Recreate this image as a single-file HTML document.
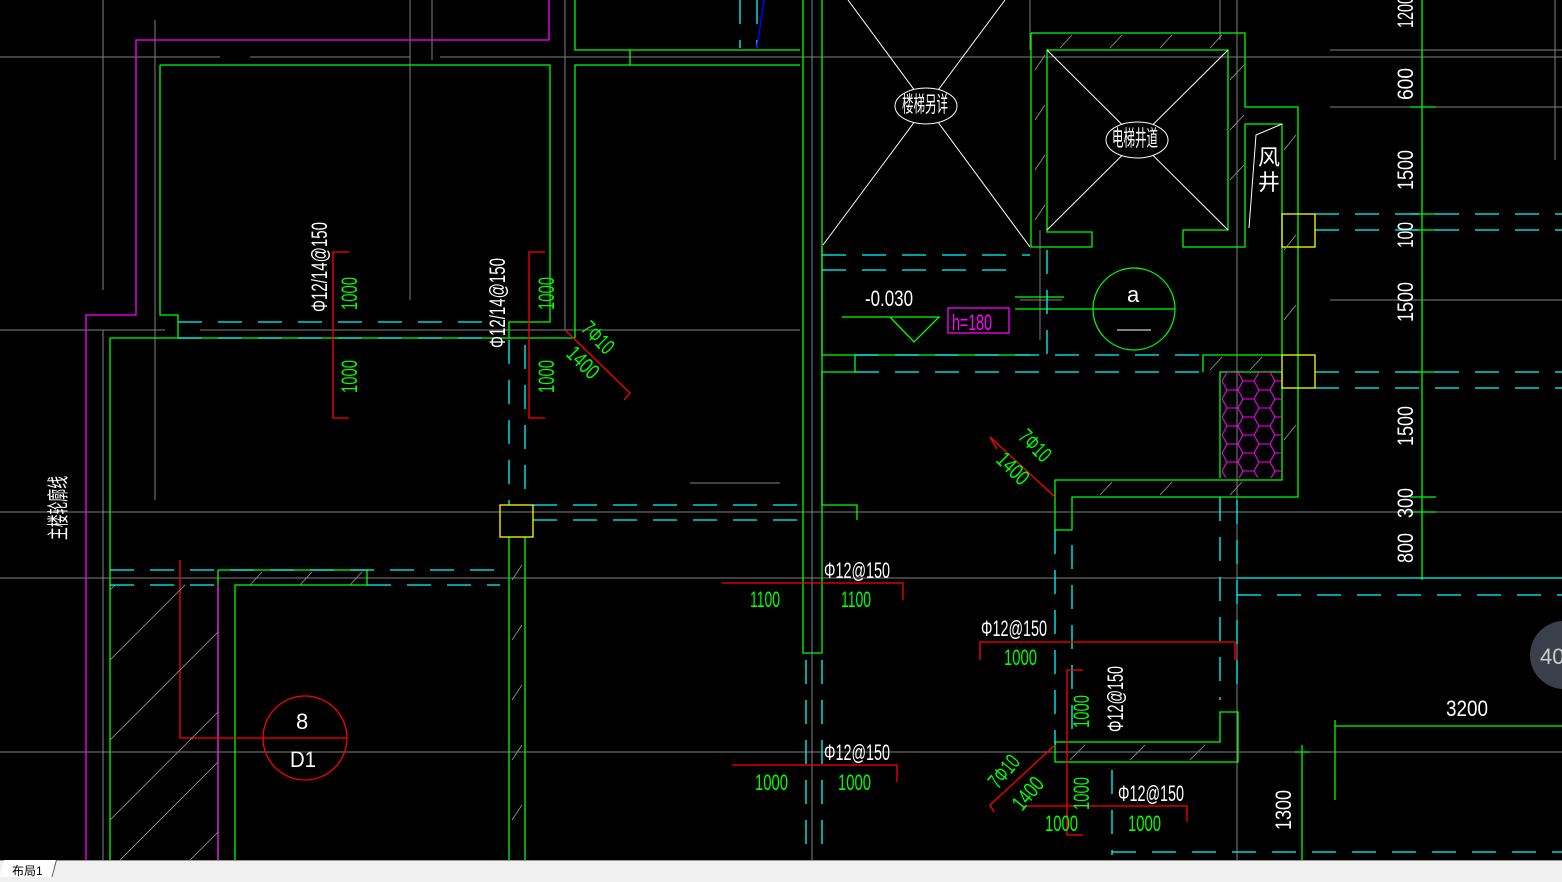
<!DOCTYPE html>
<html><head><meta charset="utf-8"><style>
html,body{margin:0;padding:0;background:#000;width:1562px;height:881px;overflow:hidden}
svg{position:absolute;left:0;top:0}
text{font-family:"Liberation Sans","Noto Sans CJK SC",sans-serif;font-size:22px}
.w{fill:#fff}.g{fill:#0f0}.m{fill:#f0f}
#bar{position:absolute;left:0;top:860px;width:1562px;height:21px;background:#f0f0f0;border-top:1px solid #999}
#tab{position:absolute;top:860px;width:52px;height:17px;background:#fff;border-right:1px solid #555;transform:skewX(-15deg);transform-origin:0 0;left:4px}
#tabt{position:absolute;left:12px;top:862px;font:12px "Liberation Sans","Noto Sans CJK SC",sans-serif;color:#000}
</style></head><body>
<svg width="1562" height="860" viewBox="0 0 1562 860">
<defs>
<pattern id="hex" x="1222" y="372" width="32" height="18" patternUnits="userSpaceOnUse">
<path d="M0 9L5 0H16L21 9L16 18H5ZM21 9H32" stroke="#f0f" fill="none" stroke-width="1"/>
</pattern>
</defs>
<rect width="1562" height="860" fill="#000"/>
<g stroke="#808080" stroke-width="1" fill="none">
<path d="M0 57H220M250 57H410M440 57H1562M0 330H165M200 330H800M0 512H1562M0 578H1562M0 752H1562M690 483H780M1330 50H1562M1330 107H1562M1330 300H1562"/>
<path d="M103 0V290M103 330V860M155 20V500M410 0V300M432 0V60M565 0V330M812 0V860M1030 0V50M1237 0V860M1220 0V40M1555 0V160M1040 230V340M1020 300H1062"/>
</g>
<g stroke="#0f0" stroke-width="1.3" fill="none">
<path d="M160 65H550V322H509V338M160 65V315H178V338M110 338H575M110 338V860M575 0V50H630V65H575V338"/>
<path d="M630 50H800M630 65H800"/>
<path d="M803 0V653H822V0"/>
<path d="M218 570H367V585H235V860M218 570V860"/>
<path d="M509 537V860M525 537V860"/>
<path d="M822 247V355H855V372H822V505H857V520M822 355H1030M1031 33H1245V107H1298V497H1072V530H1055V480H1282V372H1220V478M1031 33V247H1092V232H1047V50H1228V230H1183V247H1245V124H1282V355H1203V372M1047 50V230"/>
<path d="M1055 742H1220V712H1238V762H1055Z"/>
<path d="M1422 0V580M1410 107H1436M1410 214H1436M1410 230H1436M1410 372H1436M1410 497H1436M1410 512H1436"/>
<path d="M1335 726H1562M1335 720V800M1302 745V860M1295 752H1310"/>
<path d="M842 317H940M890 317L914 342L939 317M1015 297H1064M1015 309H1175"/>
</g>
<circle cx="1134" cy="309" r="41" stroke="#0f0" fill="none" stroke-width="1.2"/>
<g stroke="#0ff" stroke-width="1.3" fill="none" stroke-dasharray="24 16">
<path d="M178 322H500M178 338H500M509 340V505M525 345V505M533 505H800M533 520H800M110 570H500M110 585H218M367 585H500"/>
<path d="M822 255H1030M822 270H1015M855 355H1200M855 372H1200M1315 214H1562M1315 230H1562M1315 372H1562M1315 388H1562"/>
<path d="M806 660V860M822 660V860M1055 530V745M1072 545V745M1220 497V700M1237 500V700M1237 595H1562M1112 852H1562M1112 770V855M1047 250V360"/>
<path d="M740 0V48M757 0V48"/>
</g>
<path d="M1237 578H1562" stroke="#0ff" stroke-width="1.3"/>
<path d="M757 48L764 0" stroke="#00f" stroke-width="1.5"/>
<rect x="1222" y="372" width="60" height="106" fill="url(#hex)"/>
<g stroke="#f0f" stroke-width="1.3" fill="none">
<path d="M549 0V40H136V315H86V860M218 585V860"/>
<rect x="948" y="308" width="61" height="25"/>
</g>
<g stroke="#ff0" stroke-width="1.3" fill="none">
<rect x="500" y="505" width="33" height="32"/><rect x="1282" y="214" width="33" height="33"/><rect x="1282" y="355" width="33" height="33"/>
</g>
<g stroke="#f00" stroke-width="1.3" fill="none">
<path d="M349 252H333V418H349M545 252H529V418H545M565 330L630 393L624 400M990 437L1055 497M997 449L990 437"/>
<path d="M180 560V738H265M722 583H903V600M980 660V642H1235V660M732 765H897V782M1083 670H1067V835H1083M1022 806H1187V822M1055 745L990 805L994 812"/>
</g>
<circle cx="305" cy="738" r="42" stroke="#f00" fill="none" stroke-width="1.3"/>
<path d="M265 738H347" stroke="#f00" stroke-width="1.3"/>
<g stroke="#fff" stroke-width="1" fill="none">
<path d="M823 245L1005 0M848 0L1030 247M1047 50L1228 230M1228 50L1047 230"/>
<ellipse cx="926" cy="106" rx="31" ry="18" fill="#000"/>
<ellipse cx="1137" cy="140" rx="31" ry="18" fill="#000"/>
<path d="M1117 330H1151M1249 228L1256 135L1282 124"/>
</g>
<g stroke="#999" stroke-width="0.8" fill="none">
<path d="M110 660L185 585M110 740L218 632M110 820L218 712M120 860L218 762M190 860L218 832M110 590L115 585"/>
<path d="M1035 70L1045 55M1035 120L1045 105M1035 170L1045 155M1035 220L1045 205M1060 48L1072 35M1110 48L1122 35M1160 48L1172 35M1210 48L1222 35M1230 80L1244 65M1230 130L1244 115M1230 180L1244 165M1284 150L1296 135M1284 250L1296 235M1284 320L1296 305M1284 440L1296 425M1100 495L1112 482M1160 495L1172 482M1230 495L1242 482M1070 760L1085 745M1130 760L1145 745M1190 760L1205 745M512 580L522 565M512 640L522 625M512 700L522 685M512 760L522 745M512 820L522 805M250 585L262 572M300 585L312 572M350 585L362 572M1210 370L1222 357M1250 370L1262 357"/>
</g>
<g class="w">
<text x="824" y="578" textLength="66" lengthAdjust="spacingAndGlyphs">Φ12@150</text>
<text x="981" y="636" textLength="66" lengthAdjust="spacingAndGlyphs">Φ12@150</text>
<text x="824" y="760" textLength="66" lengthAdjust="spacingAndGlyphs">Φ12@150</text>
<text x="1118" y="801" textLength="66" lengthAdjust="spacingAndGlyphs">Φ12@150</text>
<text x="865" y="306" textLength="48" lengthAdjust="spacingAndGlyphs">-0.030</text>
<text x="1127" y="302" font-size="18">a</text>
<text x="296" y="729">8</text>
<text x="290" y="767" textLength="26" lengthAdjust="spacingAndGlyphs">D1</text>
<text x="1446" y="716" textLength="42" lengthAdjust="spacingAndGlyphs">3200</text>
<text x="902" y="112" font-size="15" textLength="46" lengthAdjust="spacingAndGlyphs">楼梯另详</text>
<text x="1112" y="146" font-size="15" textLength="46" lengthAdjust="spacingAndGlyphs">电梯井道</text>
<text x="1258" y="165" font-size="13">风</text>
<text x="1258" y="190" font-size="13">井</text>
<text transform="translate(327 312) rotate(-90)" textLength="90" lengthAdjust="spacingAndGlyphs">Φ12/14@150</text>
<text transform="translate(505 348) rotate(-90)" textLength="90" lengthAdjust="spacingAndGlyphs">Φ12/14@150</text>
<text transform="translate(1123 732) rotate(-90)" textLength="66" lengthAdjust="spacingAndGlyphs">Φ12@150</text>
<text transform="translate(66 540) rotate(-90)" font-size="14" textLength="64" lengthAdjust="spacingAndGlyphs">主楼轮廓线</text>
<text transform="translate(1291 830) rotate(-90)" textLength="40" lengthAdjust="spacingAndGlyphs">1300</text>
<text transform="translate(1413 28) rotate(-90)" textLength="32" lengthAdjust="spacingAndGlyphs">1200</text>
<text transform="translate(1413 100) rotate(-90)" textLength="32" lengthAdjust="spacingAndGlyphs">600</text>
<text transform="translate(1413 190) rotate(-90)" textLength="40" lengthAdjust="spacingAndGlyphs">1500</text>
<text transform="translate(1413 248) rotate(-90)" textLength="26" lengthAdjust="spacingAndGlyphs">100</text>
<text transform="translate(1413 322) rotate(-90)" textLength="40" lengthAdjust="spacingAndGlyphs">1500</text>
<text transform="translate(1413 446) rotate(-90)" textLength="40" lengthAdjust="spacingAndGlyphs">1500</text>
<text transform="translate(1413 518) rotate(-90)" textLength="30" lengthAdjust="spacingAndGlyphs">300</text>
<text transform="translate(1413 563) rotate(-90)" textLength="30" lengthAdjust="spacingAndGlyphs">800</text>
</g>
<g class="g">
<text x="750" y="607" textLength="30" lengthAdjust="spacingAndGlyphs">1100</text><text x="841" y="607" textLength="30" lengthAdjust="spacingAndGlyphs">1100</text>
<text x="1004" y="665" textLength="33" lengthAdjust="spacingAndGlyphs">1000</text>
<text x="755" y="790" textLength="33" lengthAdjust="spacingAndGlyphs">1000</text><text x="838" y="790" textLength="33" lengthAdjust="spacingAndGlyphs">1000</text>
<text x="1045" y="831" textLength="33" lengthAdjust="spacingAndGlyphs">1000</text><text x="1128" y="831" textLength="33" lengthAdjust="spacingAndGlyphs">1000</text>
<text transform="translate(357 310) rotate(-90)" textLength="33" lengthAdjust="spacingAndGlyphs">1000</text>
<text transform="translate(357 393) rotate(-90)" textLength="33" lengthAdjust="spacingAndGlyphs">1000</text>
<text transform="translate(554 310) rotate(-90)" textLength="33" lengthAdjust="spacingAndGlyphs">1000</text>
<text transform="translate(554 393) rotate(-90)" textLength="33" lengthAdjust="spacingAndGlyphs">1000</text>
<text transform="translate(1089 728) rotate(-90)" textLength="33" lengthAdjust="spacingAndGlyphs">1000</text>
<text transform="translate(1089 810) rotate(-90)" textLength="33" lengthAdjust="spacingAndGlyphs">1000</text>
<text transform="translate(580 330) rotate(45)" font-size="17" textLength="36" lengthAdjust="spacingAndGlyphs">7Φ10</text>
<text transform="translate(565 355) rotate(45)" font-size="17" textLength="36" lengthAdjust="spacingAndGlyphs">1400</text>
<text transform="translate(1017 438) rotate(45)" font-size="17" textLength="36" lengthAdjust="spacingAndGlyphs">7Φ10</text>
<text transform="translate(995 461) rotate(45)" font-size="17" textLength="36" lengthAdjust="spacingAndGlyphs">1400</text>
<text transform="translate(998 790) rotate(-50)" font-size="17" textLength="36" lengthAdjust="spacingAndGlyphs">7Φ10</text>
<text transform="translate(1022 812) rotate(-50)" font-size="17" textLength="36" lengthAdjust="spacingAndGlyphs">1400</text>
</g>
<text x="952" y="330" class="m" font-size="20" textLength="40" lengthAdjust="spacingAndGlyphs">h=180</text>
<circle cx="1564" cy="655" r="34" fill="#3a3f4b"/>
<text x="1540" y="664" fill="#ccc" font-size="22">40</text>
</svg>
<div id="bar"></div><div id="tab"></div><div id="tabt">布局1</div>
</body></html>
